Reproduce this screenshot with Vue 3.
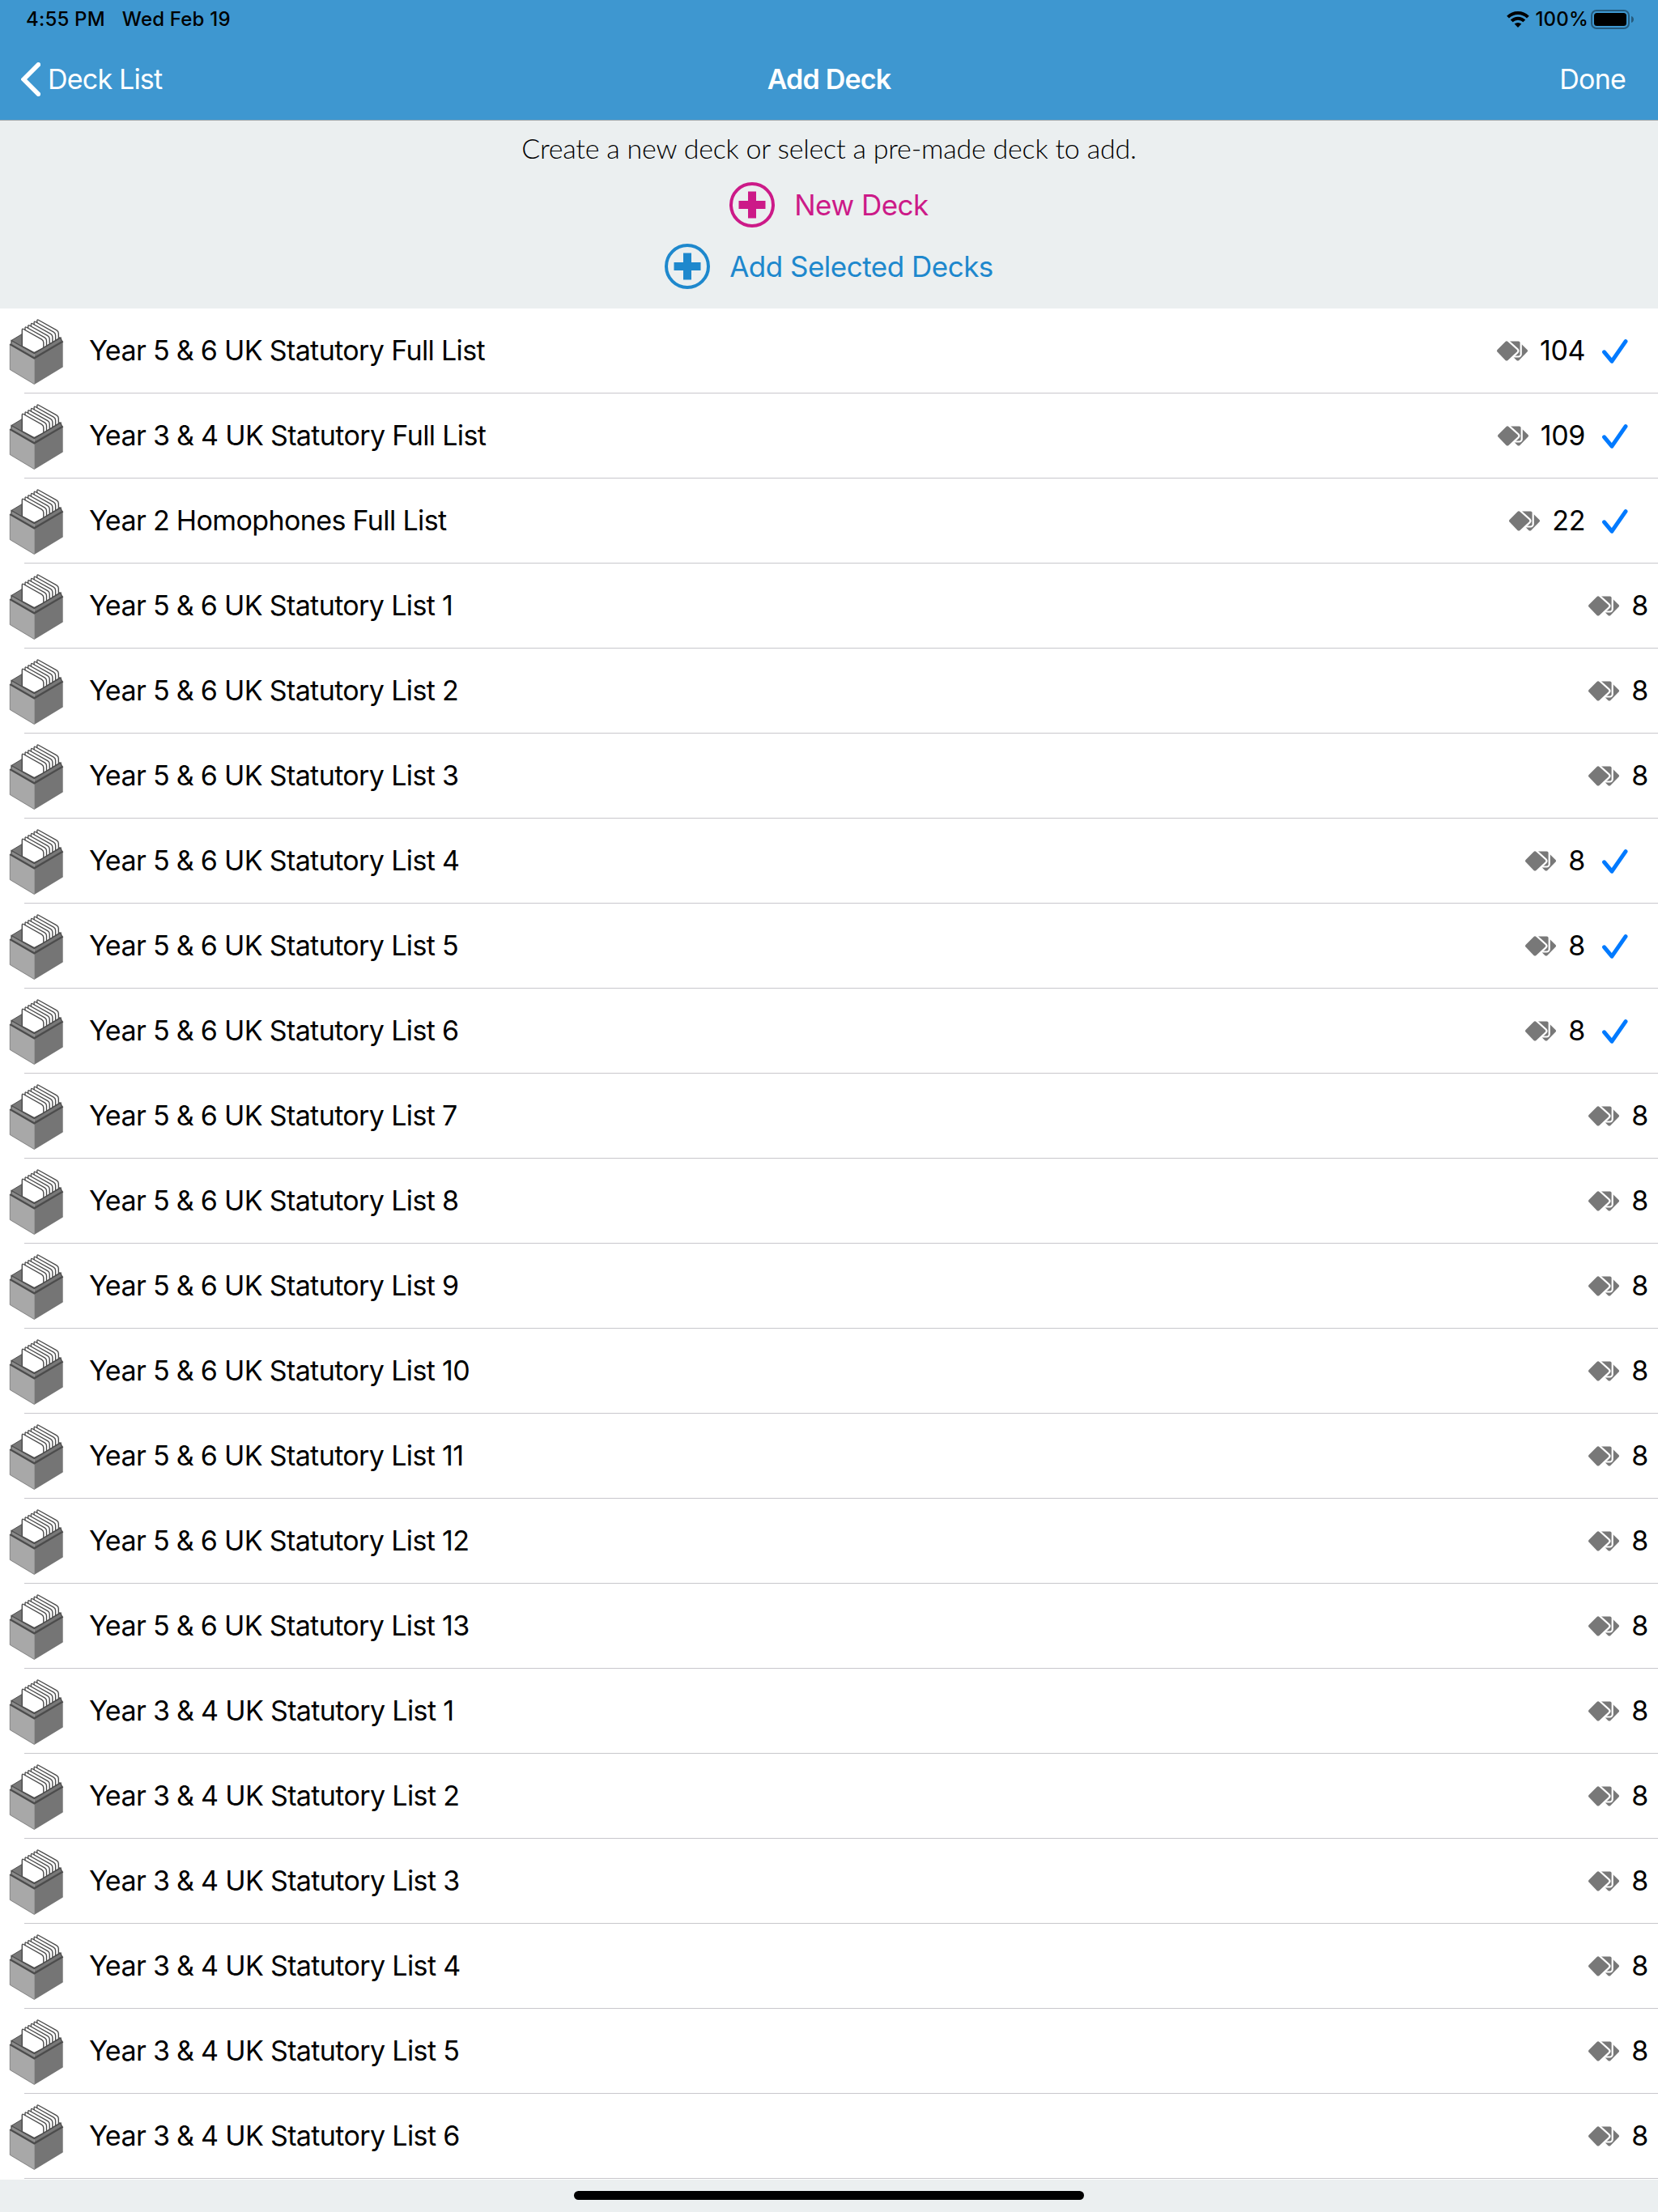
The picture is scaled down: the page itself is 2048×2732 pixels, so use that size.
<script setup>
import { ref } from 'vue'

const makeLists = (years, from, to, selected = false) => {
  const lists = []
  for (let i = from; i <= to; i++) {
    lists.push({ name: `Year ${years} UK Statutory List ${i}`, count: 8, selected })
  }
  return lists
}

const decks = ref([
  { name: 'Year 5 & 6 UK Statutory Full List', count: 104, selected: true },
  { name: 'Year 3 & 4 UK Statutory Full List', count: 109, selected: true },
  { name: 'Year 2 Homophones Full List', count: 22, selected: true },
  ...makeLists('5 & 6', 1, 3),
  ...makeLists('5 & 6', 4, 6, true),
  ...makeLists('5 & 6', 7, 13),
  ...makeLists('3 & 4', 1, 6),
])

const toggle = (deck) => {
  deck.selected = !deck.selected
}
</script>

<template>
  <div class="screen">
    <header class="header">
      <div class="status-bar">
        <span class="time">4:55 PM</span>
        <span class="date">Wed Feb 19</span>
        <svg class="wifi" viewBox="0 0 28 20">
          <path d="M1.6 7.2a17.6 17.6 0 0 1 24.8 0" />
          <path d="M6.2 11.9a11 11 0 0 1 15.6 0" />
          <path class="dot" d="M9.7 15.6a6.4 6.4 0 0 1 8.6 0L14 20z" />
        </svg>
        <span class="percent">100%</span>
        <svg class="battery" viewBox="0 0 54 24">
          <rect class="shell" x="1" y="1" width="46" height="22" rx="6" />
          <rect x="4" y="4" width="40" height="16" rx="3.5" />
          <path class="nub" d="M50 8c4 1 4 7 0 8z" />
        </svg>
      </div>
      <nav class="nav-bar">
        <div class="back">
          <svg class="chevron" viewBox="0 0 24 42">
            <path d="M21.4 2.8 3.2 21l18.2 18.2" />
          </svg>
          <span class="back-label">Deck List</span>
        </div>
        <span class="title">Add Deck</span>
        <span class="done">Done</span>
      </nav>
    </header>

    <section class="intro">
      <p class="hint">Create a new deck or select a pre-made deck to add.</p>
      <div class="action new">
        <svg class="plus" viewBox="0 0 56 56">
          <circle cx="28" cy="28" r="26" />
          <path d="M11.5 23H23V11.5h10V23h11.5v10H33v11.5H23V33H11.5z" />
        </svg>
        <span>New Deck</span>
      </div>
      <div class="action add">
        <svg class="plus" viewBox="0 0 56 56">
          <circle cx="28" cy="28" r="26" />
          <path d="M11.5 23H23V11.5h10V23h11.5v10H33v11.5H23V33H11.5z" />
        </svg>
        <span>Add Selected Decks</span>
      </div>
    </section>

    <ul class="deck-list">
      <li v-for="deck in decks" :key="deck.name" class="deck" @click="toggle(deck)">
        <svg class="box" viewBox="11 17.5 68 82">
          <!-- inside of the box -->
          <path d="M14 45 42.3 28 75 42 42.3 61z" fill="#787878" stroke="#4c4c4c" />
          <!-- cards, back to front -->
          <path
            v-for="n in 6"
            :key="n"
            :transform="`translate(${(6 - n) * 3.7} ${(n - 6) * 2.25})`"
            d="M27.3 52V32q0-2 1.7-1L51.5 43.6q2.300 1.400 2.300 4V54l-11.500 6z"
            fill="#fff"
            stroke="#4c4c4c"
            stroke-width="1.4"
          />
          <!-- inner rim -->
          <path d="M14 45 42.3 61v5L14 49.5z" fill="#8c8c8c" />
          <path d="M42.3 61 75 41.5l2 4-34.7 21z" fill="#787878" />
          <path d="M14 49V45l28.3 16L75 41.5l1 4" fill="none" stroke="#4c4c4c" stroke-width="1.3" />
          <!-- outer faces -->
          <path d="M12.3 49.5 42.3 67v32l-30-18z" fill="#a8a8a8" />
          <path d="M77.7 46 42.3 67v32l35.4-21.500z" fill="#757575" />
          <path d="M12.3 49.5V81l30 18 35.400-21.500" fill="none" stroke="#666" stroke-width=".7" />
          <path d="M12.3 49.5 42.3 66.8 77.7 46" fill="none" stroke="#4c4c4c" stroke-width="2.4" />
        </svg>
        <span class="name">{{ deck.name }}</span>
        <svg class="cards" viewBox="0 0 38 25">
          <path d="M24.300 1q1.500-1.300 3 0L37.500 11q1.200 1.300 0 2.600L27.300 23.900q-1.500 1.200-3 0L14 13.600q-1-1.300 0-2.600z" />
          <rect x="14" y=".4" width="14.600" height="18" rx="2" />
          <path d="M10.500 1q1.500-1.300 3 0L24.700 11q1.200 1.300 0 2.600L13.500 23.900q-1.500 1.200-3 0L.5 13.600q-1-1.300 0-2.600z" />
        </svg>
        <span class="count">{{ deck.count }}</span>
        <svg v-if="deck.selected" class="check" viewBox="0 0 32 30">
          <path d="M2.6 15.8 12 27.2 29 2.6" />
        </svg>
      </li>
    </ul>

    <footer class="footer">
      <div class="home-indicator"></div>
    </footer>
  </div>
</template>

<style>
body {
  margin: 0;
  background: #ebeff0;
}
</style>

<style scoped>
.screen {
  display: flex;
  flex-direction: column;
  width: 2048px;
  height: 2732px;
  overflow: hidden;
  background: #ebeff0;
  color: #000;
  font-family: Inter, "Liberation Sans", sans-serif;
  font-size: 34px;
  white-space: nowrap;
}

.header {
  box-sizing: border-box;
  height: 149px;
  background: #3e97d0;
  border-bottom: 1px solid #a3a9ad;
}

.status-bar {
  display: flex;
  align-items: center;
  box-sizing: border-box;
  height: 48px;
  padding: 0 29px 0 32px;
  font-size: 24px;
  font-weight: 500;
  letter-spacing: 0.2px;
}

.time,
.date,
.percent {
  padding-bottom: 1px;
}

.date {
  margin-left: 21px;
}

.wifi {
  width: 28px;
  height: 20px;
  margin-left: auto;
  fill: none;
  stroke: #000;
  stroke-width: 4;
}

.wifi .dot {
  fill: #000;
  stroke: none;
}

.percent {
  margin-left: 7px;
}

.battery {
  width: 54px;
  height: 24px;
  margin-left: 3px;
}

.shell {
  fill: none;
  stroke: #000;
  stroke-width: 2;
  opacity: 0.4;
}

.nub {
  opacity: 0.4;
}

.nav-bar {
  display: grid;
  grid-template-columns: 1fr auto 1fr;
  align-items: center;
  height: 100px;
  padding: 0 26px;
  color: #fff;
  letter-spacing: -0.8px;
}

.back {
  display: flex;
  align-items: center;
}

.back-label,
.title {
  padding-bottom: 1px;
}

.chevron {
  width: 24px;
  height: 42px;
  margin-right: 9px;
  fill: none;
  stroke: #fff;
  stroke-width: 5.5;
  stroke-linecap: round;
}

.title {
  font-weight: 600;
}

.done {
  padding: 0 14px 1px 0;
  text-align: right;
}

.intro {
  display: flex;
  flex-direction: column;
  align-items: center;
  box-sizing: border-box;
  height: 232px;
  padding-top: 10px;
}

.hint {
  margin: 0;
  height: 48px;
  font-family: "Gill Sans", Lato, sans-serif;
  font-weight: 300;
  font-size: 34px;
  line-height: 48px;
  letter-spacing: -0.2px;
}

.action {
  display: flex;
  align-items: center;
  gap: 24px;
  height: 56px;
  margin-top: 20px;
  font-size: 35px;
  letter-spacing: -0.5px;
}

.new {
  margin-top: 18px;
  color: #cc1a88;
}

.add {
  color: #1e88cd;
}

.plus {
  width: 56px;
  height: 56px;
  fill: currentColor;
}

.plus circle {
  fill: none;
  stroke: currentColor;
  stroke-width: 4;
}

.deck-list {
  margin: 0;
  padding: 0 0 1px;
  list-style: none;
  background: #fff;
}

.deck {
  display: flex;
  align-items: center;
  box-sizing: border-box;
  height: 105px;
  padding: 0 12px 0 11px;
  background: linear-gradient(#c8c7cc, #c8c7cc) 30px 100% / 100% 1px no-repeat;
}

.box {
  width: 68px;
  height: 82px;
}

.name {
  margin-left: 31px;
  padding-bottom: 2px;
  letter-spacing: -0.6px;
  word-spacing: -0.2px;
}

.cards {
  width: 38px;
  height: 25px;
  margin-left: auto;
  fill: #787878;
  stroke: #fff;
  stroke-width: 4.4;
  paint-order: stroke;
}

.count {
  margin-left: 15px;
  padding-bottom: 2px;
  letter-spacing: -0.4px;
}

.check {
  width: 32px;
  height: 30px;
  margin: 0 25px 0 21px;
  fill: none;
  stroke: #007aff;
  stroke-width: 5;
  stroke-linecap: round;
  stroke-linejoin: round;
}

.footer {
  display: flex;
  justify-content: center;
}

.home-indicator {
  width: 630px;
  height: 11px;
  margin-top: 14px;
  border-radius: 6px;
  background: #000;
}
</style>
